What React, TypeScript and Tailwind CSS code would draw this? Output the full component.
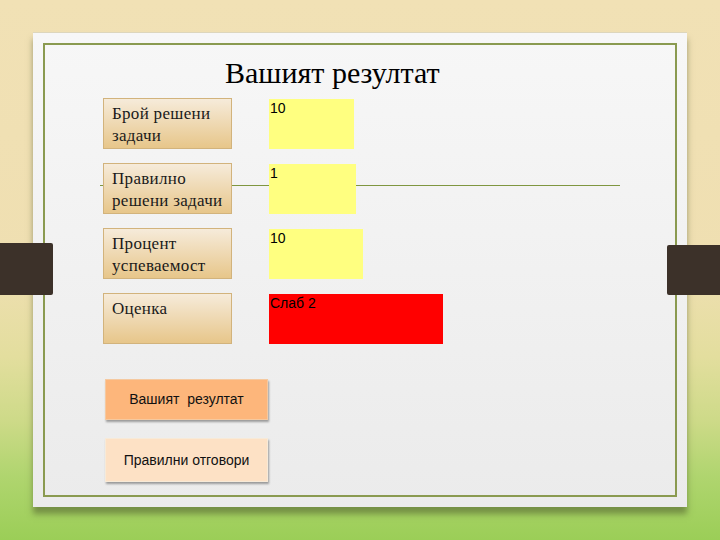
import React from "react";

const rows = [
  { label: ["Брой решени", "задачи"], value: "10", w: "w-[85px]", bg: "bg-[#ffff80]" },
  { label: ["Правилно", "решени задачи"], value: "1", w: "w-[87px]", bg: "bg-[#ffff80]" },
  { label: ["Процент", "успеваемост"], value: "10", w: "w-[94px]", bg: "bg-[#ffff80]" },
  { label: ["Оценка"], value: "Слаб 2", w: "w-[174px]", bg: "bg-[#ff0000]" },
];

export default function App() {
  return (
    <div className="relative w-[720px] h-[540px] overflow-hidden pt-[32px] pl-[33px] bg-[linear-gradient(to_bottom,#f1e1b5_0%,#efdfb1_50%,#e3de9e_66%,#cdda88_78%,#b0d56f_88%,#9bce57_100%)]">
      <div className="w-[654px] h-[475px] p-[10px] border-t border-[#ddd6bc] bg-[linear-gradient(to_bottom,#f7f7f7,#ebebeb)] shadow-[0_7px_6px_rgba(70,80,40,0.5)]">
        <div className="relative h-full border-2 border-[#8a9a50]">
          <div className="absolute left-[55px] top-[140px] w-[520px] h-px bg-[#7f9640]" />
          <div className="mt-[11px] ml-[180px] text-[30px] leading-[34px] text-black font-['Liberation_Serif',serif]">
            Вашият резултат
          </div>
          <div className="relative mt-[8px] ml-[58px] flex flex-col gap-[14px]">
            {rows.map((r, i) => (
              <div key={i} className="flex items-start">
                <div className="w-[129px] h-[51px] border border-[#d2b37c] bg-[linear-gradient(to_bottom,#f6ebda,#e7c68a)] pl-[8px] pt-[4px] text-[17px] leading-[22px] tracking-[0.3px] text-[#1a1a1a] font-['Liberation_Serif',serif] whitespace-nowrap">
                  {r.label.map((l, j) => (
                    <div key={j}>{l}</div>
                  ))}
                </div>
                <div
                  className={`ml-[37px] mt-px h-[50px] ${r.w} ${r.bg} pl-[1px] pt-[1px] text-[14px] leading-[16px] text-black font-['Liberation_Sans',sans-serif]`}
                >
                  {r.value}
                </div>
              </div>
            ))}
          </div>
          <div className="ml-[60px] mt-[35px] flex flex-col gap-[18px]">
            <div className="w-[163px] h-[41px] flex items-center justify-center bg-[#fdb67b] border border-[#f5c9a0] shadow-[1px_2px_2px_rgba(0,0,0,0.35)] text-[14px] text-[#111] font-['Liberation_Sans',sans-serif] whitespace-pre">
              {"Вашият  резултат"}
            </div>
            <div className="w-[163px] h-[44px] flex items-center justify-center bg-[#fde1c5] border border-[#f7ead8] shadow-[1px_2px_2px_rgba(0,0,0,0.35)] text-[14px] text-[#111] font-['Liberation_Sans',sans-serif]">
              Правилни отговори
            </div>
          </div>
        </div>
      </div>
      <div className="absolute left-0 top-[243px] w-[53px] h-[52px] bg-[#3c3129] rounded-r-[2px]" />
      <div className="absolute left-[667px] top-[245px] w-[53px] h-[50px] bg-[#3c3129] rounded-l-[2px]" />
    </div>
  );
}
